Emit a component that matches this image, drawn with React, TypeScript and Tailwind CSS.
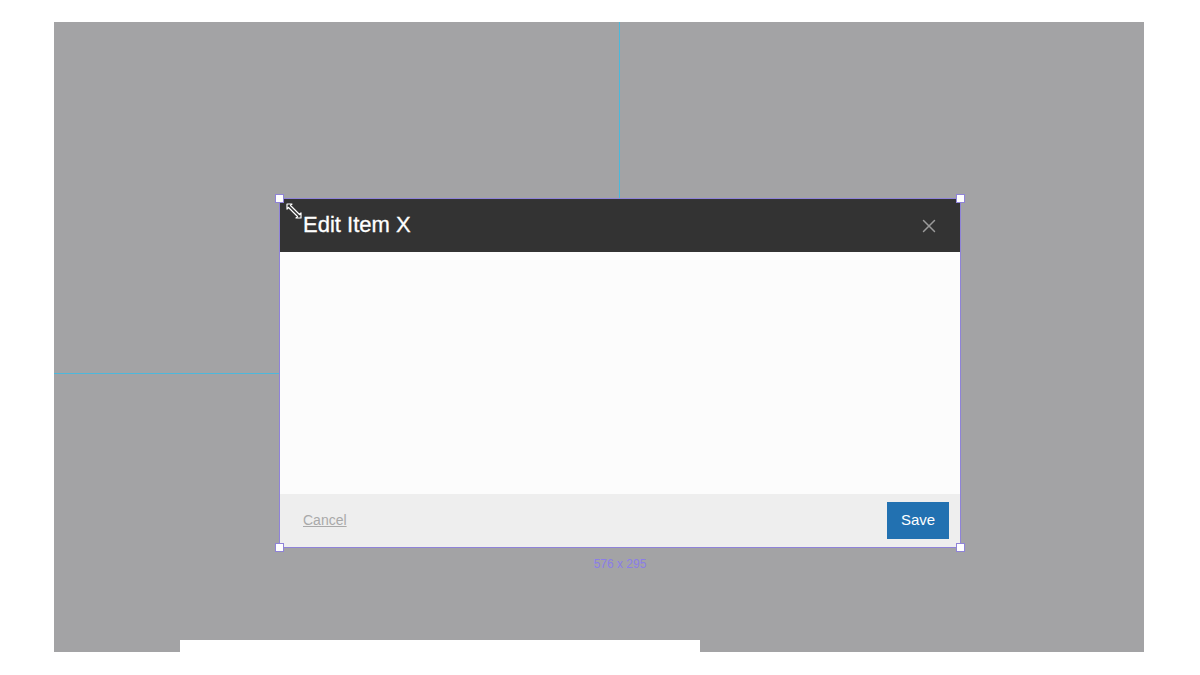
import { X } from 'lucide-react';

function Handle({ className }: { className: string }) {
  return (
    <div className={`absolute w-[9px] h-[9px] bg-white border border-[#8f83d8] ${className}`} />
  );
}

function ResizeCursor() {
  return (
    <svg width="18" height="18" viewBox="0 0 18 18" className="absolute left-[5px] top-[3px]">
      <path
        d="M2 2 L7 2 L5.5 3.5 L14.5 12.5 L16 11 L16 16 L11 16 L12.5 14.5 L3.5 5.5 L2 7 Z"
        fill="#333"
        stroke="#fff"
        strokeWidth="1.2"
        strokeLinejoin="round"
      />
    </svg>
  );
}

export default function App() {
  return (
    <div className="w-[1200px] h-[675px] bg-white pt-[22px] pl-[54px] font-['Liberation_Sans',Arial,sans-serif]">
      <div className="relative w-[1090px] h-[630px] bg-[#a3a3a5]">
        {/* guide lines */}
        <div className="absolute left-[565px] top-0 w-px h-[176px] bg-[#4cb8dc]" />
        <div className="absolute left-0 top-[351px] w-[225px] h-px bg-[#4cb8dc]" />

        {/* dialog on canvas */}
        <div className="absolute left-[225px] top-[176px] w-[682px] h-[350px] border border-[#8f83d8] flex flex-col">
          <div className="h-[53px] bg-[#333333] flex items-center justify-between pl-[23px] pr-[20px]">
            <span className="text-white text-[22px] leading-none -mt-[2px] [-webkit-text-stroke:0.3px_white]">Edit Item X</span>
            <X size={22} strokeWidth={1.6} className="text-[#9a9a9a]" />
          </div>
          <div className="flex-1 bg-[#fcfcfc]" />
          <div className="h-[53px] bg-[#eeeeee] flex items-center justify-between pl-[23px] pr-[11px]">
            <span className="text-[14px] text-[#a9a9a9] underline">Cancel</span>
            <button className="w-[62px] h-[37px] bg-[#2271b1] text-white text-[15px]">Save</button>
          </div>

          <ResizeCursor />
          <Handle className="-left-[5px] -top-[5px]" />
          <Handle className="-right-[5px] -top-[5px]" />
          <Handle className="-left-[5px] -bottom-[5px]" />
          <Handle className="-right-[5px] -bottom-[5px]" />

          <div className="absolute left-0 right-0 -bottom-[23px] text-center text-[12px] text-[#8b7de8] leading-none">
            576 x 295
          </div>
        </div>

        <div className="absolute left-[126px] top-[618px] w-[520px] h-[12px] bg-white" />
      </div>
    </div>
  );
}
